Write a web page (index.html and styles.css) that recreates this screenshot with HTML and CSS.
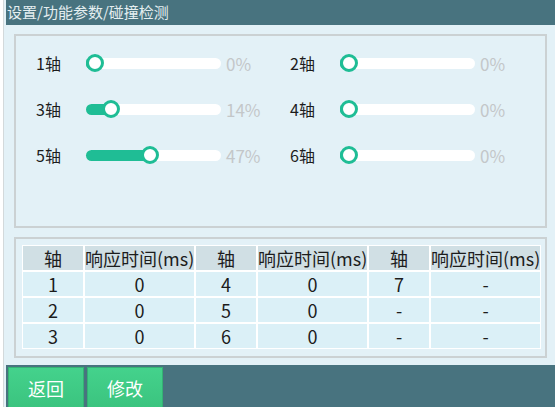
FILE: index.html
```html
<!doctype html>
<html lang="zh-CN">
  <head>
    <meta charset="UTF-8" />
    <title>碰撞检测</title>
    <link rel="stylesheet" href="styles.css">
  </head>
  <body>
    <div class="screen">
      <div class="title-bar">设置/功能参数/碰撞检测</div>

      <div class="panel sliders">
        <div class="slider-item">
          <span class="axis-label">1轴</span>
          <div class="track"><div class="fill" style="width: 9px"></div><div class="knob" style="left: 0px"></div></div>
          <span class="pct">0%</span>
        </div>
        <div class="slider-item">
          <span class="axis-label">2轴</span>
          <div class="track"><div class="fill" style="width: 9px"></div><div class="knob" style="left: 0px"></div></div>
          <span class="pct">0%</span>
        </div>
        <div class="slider-item">
          <span class="axis-label">3轴</span>
          <div class="track"><div class="fill" style="width: 25px"></div><div class="knob" style="left: 16px"></div></div>
          <span class="pct">14%</span>
        </div>
        <div class="slider-item">
          <span class="axis-label">4轴</span>
          <div class="track"><div class="fill" style="width: 9px"></div><div class="knob" style="left: 0px"></div></div>
          <span class="pct">0%</span>
        </div>
        <div class="slider-item">
          <span class="axis-label">5轴</span>
          <div class="track"><div class="fill" style="width: 64px"></div><div class="knob" style="left: 55px"></div></div>
          <span class="pct">47%</span>
        </div>
        <div class="slider-item">
          <span class="axis-label">6轴</span>
          <div class="track"><div class="fill" style="width: 9px"></div><div class="knob" style="left: 0px"></div></div>
          <span class="pct">0%</span>
        </div>
      </div>

      <div class="panel table-panel">
        <table class="resp-table">
          <colgroup>
            <col class="c-axis" /><col class="c-time" />
            <col class="c-axis" /><col class="c-time" />
            <col class="c-axis" /><col class="c-time" />
          </colgroup>
          <thead>
            <tr>
              <th>轴</th><th>响应时间(ms)</th>
              <th>轴</th><th>响应时间(ms)</th>
              <th>轴</th><th>响应时间(ms)</th>
            </tr>
          </thead>
          <tbody>
            <tr><td>1</td><td>0</td><td>4</td><td>0</td><td>7</td><td>-</td></tr>
            <tr><td>2</td><td>0</td><td>5</td><td>0</td><td>-</td><td>-</td></tr>
            <tr><td>3</td><td>0</td><td>6</td><td>0</td><td>-</td><td>-</td></tr>
          </tbody>
        </table>
      </div>

      <div class="footer">
        <button class="btn">返回</button>
        <button class="btn">修改</button>
      </div>
    </div>
  </body>
</html>
```

FILE: styles.css
```css
* {
  margin: 0;
  padding: 0;
  box-sizing: border-box;
}

body {
  background: #ffffff;
  font-family: 'Noto Sans CJK SC', 'Noto Sans', sans-serif;
  color: #1c1c1c;
  width: 556px;
  height: 407px;
  overflow: hidden;
}

.screen {
  margin-left: 3px;
  width: 552px;
  height: 407px;
  border-left: 1px solid #d3d9db;
  background: #e3f1f7;
  display: flex;
  flex-direction: column;
}

.title-bar {
  margin-left: 2px;
  height: 25px;
  background: #48737f;
  color: #e4eef0;
  font-size: 15px;
  line-height: 24px;
  padding-left: 1px;
}

.panel {
  margin: 9px 8px 0 10px;
  border: 2px solid #cbd1d3;
}

/* sliders */
.sliders {
  height: 194px;
  padding: 12px 0 0 20px;
  display: grid;
  grid-template-columns: 254px 254px;
  grid-auto-rows: 30px;
  row-gap: 16px;
}

.slider-item {
  display: flex;
  align-items: center;
}

.axis-label {
  width: 50px;
  font-size: 16px;
}

.track {
  position: relative;
  width: 135px;
  height: 11px;
  border-radius: 6px;
  background: #ffffff;
}

.fill {
  height: 11px;
  border-radius: 6px;
  background: #1fbd95;
}

.knob {
  position: absolute;
  top: -4px;
  width: 18px;
  height: 18px;
  border-radius: 50%;
  background: #ffffff;
  border: 3px solid #1fbd95;
}

.pct {
  margin-left: 5px;
  font-size: 17px;
  color: #c3c7c9;
}

/* table */
.table-panel {
  height: 121px;
  padding: 6px 0 0 6px;
}

.resp-table {
  border-collapse: separate;
  border-spacing: 0;
  width: 518px;
  table-layout: fixed;
  font-size: 18px;
  text-align: center;
}

.c-axis {
  width: 62px;
}

.c-time {
  width: 111px;
}

.resp-table th,
.resp-table td {
  height: 26px;
  border: 1px solid #ffffff;
  font-weight: normal;
  line-height: 22px;
  padding: 0;
  white-space: nowrap;
}

.resp-table th {
  background: #d0dfe4;
}

.resp-table td {
  background: #dbf0f7;
}

/* footer */
.footer {
  margin-top: auto;
  margin-left: 2px;
  height: 42px;
  background: #48737f;
  padding: 2px 0 0 2px;
  display: flex;
  gap: 3px;
}

.btn {
  width: 76px;
  height: 40px;
  border: 1px solid #34b274;
  border-bottom: none;
  background: linear-gradient(#44d28c, #3bc47f);
  color: #ffffff;
  font-family: inherit;
  font-size: 18px;
  cursor: pointer;
}
```
